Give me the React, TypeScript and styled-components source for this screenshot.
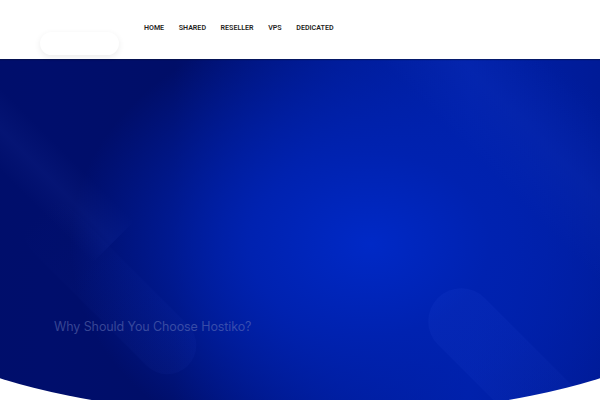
import React from "react";
import styled, { createGlobalStyle } from "styled-components";

const GlobalStyle = createGlobalStyle`
  html, body { margin: 0; padding: 0; }
  body {
    background: #ffffff;
    overflow: hidden;
    font-family: Roboto, "Liberation Sans", Arial, sans-serif;
  }
`;

const Page = styled.div`
  width: 600px;
  height: 400px;
  overflow: hidden;
  position: relative;
  background: #ffffff;
`;

const Header = styled.header`
  position: relative;
  z-index: 2;
  height: 59px;
  display: flex;
  align-items: flex-start;
  background: #ffffff;
  box-shadow: 0 1px 1px rgba(10, 20, 60, 0.55);
`;

const LogoPill = styled.div`
  margin: 32px 0 0 40px;
  width: 79px;
  height: 23px;
  border-radius: 12px;
  background: #ffffff;
  box-shadow: 0 2px 6px rgba(0, 0, 0, 0.08);
`;

const Nav = styled.nav`
  display: flex;
  gap: 14.6px;
  margin: 23px 0 0 25px;
`;

const NavLink = styled.a`
  font-size: 7.1px;
  line-height: 10px;
  font-weight: 600;
  color: #1f1f24;
  text-transform: uppercase;
  text-decoration: none;
`;

const Hero = styled.section`
  position: relative;
  margin: 0 -120px;
  padding: 0 120px;
  height: 358px;
  overflow: hidden;
  border-radius: 0 0 420px 420px / 0 0 129px 129px;
  background:
    radial-gradient(ellipse 300px 230px at 490px 185px, #0029c6 0%, #0022b0 40%, rgba(0, 28, 160, 0) 100%),
    linear-gradient(90deg, #000e6a 0%, #000e6c 20%, #000e68 35%, #001a92 55%, #0020a8 70%, #001b98 85%, #00168a 100%);
`;

const Band = styled.div<{ $left: number; $top: number; $w: number; $h: number; $alpha: number }>`
  position: absolute;
  left: ${(p) => p.$left}px;
  top: ${(p) => p.$top}px;
  width: ${(p) => p.$w}px;
  height: ${(p) => p.$h}px;
  transform: rotate(45deg);
  background: linear-gradient(
    0deg,
    rgba(80, 120, 255, 0) 0%,
    rgba(80, 120, 255, ${(p) => p.$alpha}) 50%,
    rgba(80, 120, 255, 0) 100%
  );
  pointer-events: none;
`;

const Capsule = styled.div<{ $left: number; $top: number; $len: number; $thick: number; $alpha: number }>`
  position: absolute;
  left: ${(p) => p.$left}px;
  top: ${(p) => p.$top}px;
  width: ${(p) => p.$len}px;
  height: ${(p) => p.$thick}px;
  border-radius: ${(p) => p.$thick / 2}px;
  transform: rotate(45deg);
  background: linear-gradient(
    90deg,
    rgba(70, 110, 255, ${(p) => p.$alpha}) 0%,
    rgba(70, 110, 255, ${(p) => p.$alpha * 0.6}) 50%,
    rgba(70, 110, 255, 0) 100%
  );
  pointer-events: none;
`;

const CapsuleRev = styled(Capsule)`
  background: linear-gradient(
    270deg,
    rgba(70, 110, 255, ${(p) => p.$alpha}) 0%,
    rgba(70, 110, 255, ${(p) => p.$alpha * 0.5}) 50%,
    rgba(70, 110, 255, 0) 100%
  );
`;

const Content = styled.div`
  position: relative;
  padding: 260px 0 0 54px;
`;

const Title = styled.h2`
  margin: 0;
  font-family: Inter, Roboto, "Liberation Sans", sans-serif;
  font-size: 12.5px;
  line-height: 16px;
  font-weight: 400;
  letter-spacing: -0.1px;
  color: rgba(110, 125, 190, 0.5);
`;

const links = ["Home", "Shared", "Reseller", "VPS", "Dedicated"];

export default function App() {
  return (
    <Page>
      <GlobalStyle />
      <Header>
        <LogoPill />
        <Nav>
          {links.map((l) => (
            <NavLink key={l} href="#">
              {l}
            </NavLink>
          ))}
        </Nav>
      </Header>
      <Hero>
        <Band $left={-40} $top={40} $w={320} $h={60} $alpha={0.06} />
        <Band $left={470} $top={10} $w={360} $h={120} $alpha={0.05} />
        <Band $left={600} $top={-60} $w={300} $h={80} $alpha={0.04} />
        <Capsule $left={514} $top={312} $len={300} $thick={66} $alpha={0.07} />
        <CapsuleRev $left={120} $top={200} $len={220} $thick={58} $alpha={0.045} />
        <Content>
          <Title>Why Should You Choose Hostiko?</Title>
        </Content>
      </Hero>
    </Page>
  );
}
